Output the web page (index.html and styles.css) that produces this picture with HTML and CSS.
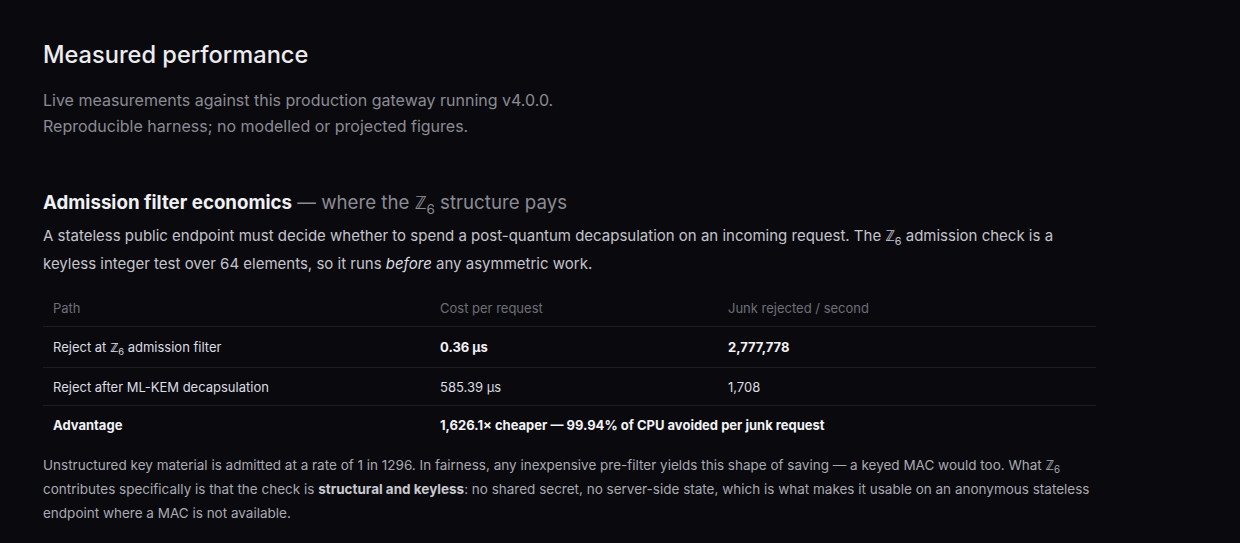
FILE: index.html
```html
<!DOCTYPE html>
<html>
<head>
<meta charset="utf-8">
<link rel="stylesheet" href="styles.css">
</head>
<body>
<main class="page">
  <h1 class="title">Measured performance</h1>
  <p class="lede">Live measurements against this production gateway running v4.0.0.<br>Reproducible harness; no modelled or projected figures.</p>

  <section class="econ">
    <h2 class="econ-title"><strong>Admission filter economics</strong> <span class="muted">— where the ℤ<sub>6</sub> structure pays</span></h2>
    <p class="econ-intro">A stateless public endpoint must decide whether to spend a post-quantum decapsulation on an incoming request. The ℤ<sub>6</sub> admission check is a keyless integer test over 64 elements, so it runs <em>before</em> any asymmetric work.</p>

    <table class="econ-table">
      <colgroup>
        <col class="c1"><col class="c2"><col class="c3">
      </colgroup>
      <thead>
        <tr><th>Path</th><th>Cost per request</th><th>Junk rejected / second</th></tr>
      </thead>
      <tbody>
        <tr class="tall"><td>Reject at ℤ<sub>6</sub> admission filter</td><td class="b">0.36 µs</td><td class="b">2,777,778</td></tr>
        <tr><td>Reject after ML-KEM decapsulation</td><td>585.39 µs</td><td>1,708</td></tr>
        <tr class="adv"><td class="b">Advantage</td><td class="b" colspan="2">1,626.1× cheaper — 99.94% of CPU avoided per junk request</td></tr>
      </tbody>
    </table>

    <p class="econ-note">Unstructured key material is admitted at a rate of 1 in 1296. In fairness, any inexpensive pre-filter yields this shape of saving — a keyed MAC would too. What ℤ<sub>6</sub> contributes specifically is that the check is <strong>structural and keyless</strong>: no shared secret, no server-side state, which is what makes it usable on an anonymous stateless endpoint where a MAC is not available.</p>
  </section>
</main>
</body>
</html>
```

FILE: styles.css
```css
html, body {
  margin: 0;
  padding: 0;
  background: #0a0a0e;
}
body {
  font-family: Inter, "Noto Sans", "DejaVu Sans", sans-serif;
  color: #e6e6eb;
}
.page {
  padding: 40px 0 0 43px;
  width: 1053px;
}
.title {
  margin: 0;
  font-size: 23.6px;
  font-weight: 500;
  line-height: 30px;
  color: #ececf1;
}
.lede {
  margin: 17px 0 0;
  font-size: 16px;
  line-height: 26px;
  color: #8b8b94;
}
.econ {
  margin-top: 51px;
}
.econ-title {
  margin: 0;
  font-size: 18.7px;
  line-height: 26px;
  font-weight: 400;
}
.econ-title strong {
  font-weight: 700;
  color: #f0f0f4;
}
.muted {
  color: #8b8b94;
}
sub {
  font-size: 0.72em;
  vertical-align: -0.35em;
  line-height: 0;
}
.econ-intro {
  margin: 6px 0 0;
  width: 1030px;
  font-size: 15px;
  line-height: 28px;
  color: #c4c4cc;
}
.econ-intro em {
  color: #dcdce2;
}
.econ-table {
  margin-top: 12px;
  width: 1053px;
  border-collapse: collapse;
  font-size: 13px;
  color: #dcdce2;
}
.c1 { width: 387px; }
.c2 { width: 288px; }
.c3 { width: 378px; }
.econ-table th {
  text-align: left;
  font-weight: 400;
  color: #6e6e78;
  padding: 0 10px;
  height: 36px;
  border-bottom: 1px solid #1d1d24;
}
.econ-table td {
  padding: 0 10px;
  height: 37px;
  border-bottom: 1px solid #1d1d24;
}
.econ-table tr.tall td {
  height: 40px;
}
.econ-table tr.adv td {
  border-bottom: none;
}
.econ-table .b {
  font-weight: 700;
  color: #f2f2f6;
}
.econ-note {
  margin: 10px 0 0;
  font-size: 13.5px;
  line-height: 24px;
  color: #a9a9b2;
}
.econ-note strong {
  color: #c9c9d0;
}
```
